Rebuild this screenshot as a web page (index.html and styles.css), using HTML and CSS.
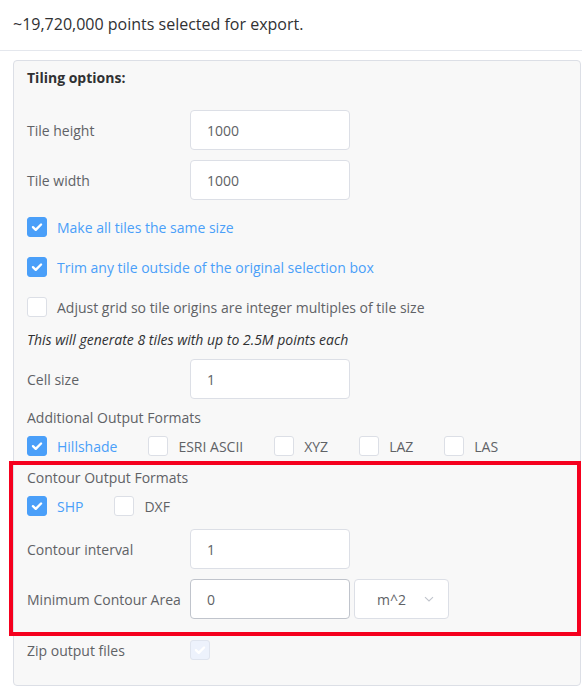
FILE: index.html
```html
<!DOCTYPE html>
<html lang="en">
<head>
    <meta charset="UTF-8">
    <meta name="viewport" content="width=device-width, initial-scale=1.0">
    <title>Export</title>
    <link rel="stylesheet" href="styles.css">
</head>
<body>

    <div class="header">~19,720,000 points selected for export.</div>

    <div class="panel">
        <div class="panel-title">Tiling options:</div>

        <!-- tile size -->
        <div class="field">
            <label class="field-label">Tile height</label>
            <input class="text-input" type="text" value="1000">
        </div>
        <div class="field">
            <label class="field-label">Tile width</label>
            <input class="text-input" type="text" value="1000">
        </div>

        <label class="check-row checked first">
            <span class="box"><svg viewBox="0 0 20 20"><path d="M5.5 10.2 L8.6 13.2 L14.5 7.2"/></svg></span>
            Make all tiles the same size
        </label>
        <label class="check-row checked">
            <span class="box"><svg viewBox="0 0 20 20"><path d="M5.5 10.2 L8.6 13.2 L14.5 7.2"/></svg></span>
            Trim any tile outside of the original selection box
        </label>
        <label class="check-row">
            <span class="box"></span>
            Adjust grid so tile origins are integer multiples of tile size
        </label>

        <div class="note">This will generate 8 tiles with up to 2.5M points each</div>

        <div class="field cell">
            <label class="field-label">Cell size</label>
            <input class="text-input" type="text" value="1">
        </div>

        <div class="group-label">Additional Output Formats</div>
        <div class="options">
            <label class="option checked">
                <span class="box"><svg viewBox="0 0 20 20"><path d="M5.5 10.2 L8.6 13.2 L14.5 7.2"/></svg></span>
                Hillshade
            </label>
            <label class="option"><span class="box"></span>ESRI ASCII</label>
            <label class="option"><span class="box"></span>XYZ</label>
            <label class="option"><span class="box"></span>LAZ</label>
            <label class="option"><span class="box"></span>LAS</label>
        </div>

        <!-- contour section (highlighted) -->
        <div class="highlight">
            <div class="group-label">Contour Output Formats</div>
            <div class="options">
                <label class="option checked">
                    <span class="box"><svg viewBox="0 0 20 20"><path d="M5.5 10.2 L8.6 13.2 L14.5 7.2"/></svg></span>
                    SHP
                </label>
                <label class="option"><span class="box"></span>DXF</label>
            </div>

            <div class="field interval">
                <label class="field-label">Contour interval</label>
                <input class="text-input" type="text" value="1">
            </div>
            <div class="field area">
                <label class="field-label">Minimum Contour Area</label>
                <input class="text-input hover" type="text" value="0">
                <div class="select">
                    <span>m^2</span>
                    <svg viewBox="0 0 12 12"><path d="M2 4.2 L6 8 L10 4.2"/></svg>
                </div>
            </div>
        </div>

        <div class="field zip">
            <label class="field-label">Zip output files</label>
            <span class="box disabled"><svg viewBox="0 0 20 20"><path d="M5.5 10.2 L8.6 13.2 L14.5 7.2"/></svg></span>
        </div>
    </div>

</body>
</html>
```

FILE: styles.css
```css
body {
    margin: 0;
    font-family: "Open Sans", "Noto Sans", sans-serif;
    font-size: 14px;
    color: #606266;
    background-color: white;
}

.header {
    height: 50px;
    line-height: 48px;
    padding: 0 13px;
    font-size: 16px;
    color: #303133;
    border-bottom: 1px solid #e4e7ed;
}

.panel {
    margin: 9px 1px 0 13px;
    padding: 7px 14px 25px 13px;
    background-color: #f8f8f8;
    border: 1px solid #dcdfe6;
    border-radius: 4px;
}

.panel-title {
    font-weight: bold;
    color: #303133;
    line-height: 20px;
    margin-bottom: 22px;
}

.field {
    display: flex;
    align-items: center;
    height: 40px;
    margin-bottom: 10px;
}

.field-label {
    width: 163px;
    flex-shrink: 0;
}

.text-input {
    box-sizing: border-box;
    width: 160px;
    height: 40px;
    padding: 0 16px;
    border: 1px solid #dcdfe6;
    border-radius: 4px;
    background: white;
    font-family: inherit;
    font-size: 14px;
    color: #606266;
    outline: none;
}

    .text-input.hover {
        border-color: #c0c4cc;
    }

.box {
    box-sizing: border-box;
    display: inline-flex;
    align-items: center;
    justify-content: center;
    width: 20px;
    height: 20px;
    border: 1px solid #dcdfe6;
    border-radius: 3px;
    background: white;
    flex-shrink: 0;
}

    .box svg {
        width: 20px;
        height: 20px;
    }

    .box path {
        fill: none;
        stroke: white;
        stroke-width: 2.6;
        stroke-linecap: round;
        stroke-linejoin: round;
    }

.checked {
    color: #4a9ff9;
}

    .checked .box {
        background: #4a9ff9;
        border-color: #4a9ff9;
    }

.check-row {
    display: flex;
    align-items: center;
    gap: 10px;
    height: 20px;
    margin-top: 20px;
}

    .check-row.first {
        margin-top: 17px;
    }

.note {
    font-style: italic;
    color: #303133;
    line-height: 20px;
    margin-top: 13px;
}

.field.cell {
    margin-top: 9px;
    margin-bottom: 0;
}

.group-label {
    line-height: 20px;
    margin-top: 9px;
}

.options {
    display: flex;
    align-items: center;
    height: 20px;
    margin-top: 8px;
}

.option {
    display: flex;
    align-items: center;
    gap: 10px;
    margin-right: 31px;
}

.highlight {
    margin: 5px -15px 0 -18px;
    padding: 0 11px 13px 14px;
    border: 4px solid #f5001e;
}

    .highlight .group-label {
        margin-top: 3px;
    }

.field.interval {
    margin-top: 13px;
}

.field.area {
    gap: 4px;
    margin-bottom: 0;
}

    .field.area .field-label {
        width: 159px;
    }

.select {
    box-sizing: border-box;
    display: flex;
    align-items: center;
    justify-content: space-between;
    width: 95px;
    height: 40px;
    padding: 0 13px 0 22px;
    background: white;
    border: 1px solid #dcdfe6;
    border-radius: 4px;
}

    .select svg {
        width: 12px;
        height: 12px;
    }

    .select path {
        fill: none;
        stroke: #c0c4cc;
        stroke-width: 1.1;
    }

.field.zip {
    height: 20px;
    margin-top: 4px;
    margin-bottom: 0;
}

.box.disabled {
    background: #edf2fc;
    border-color: #dfe4ee;
}
```
